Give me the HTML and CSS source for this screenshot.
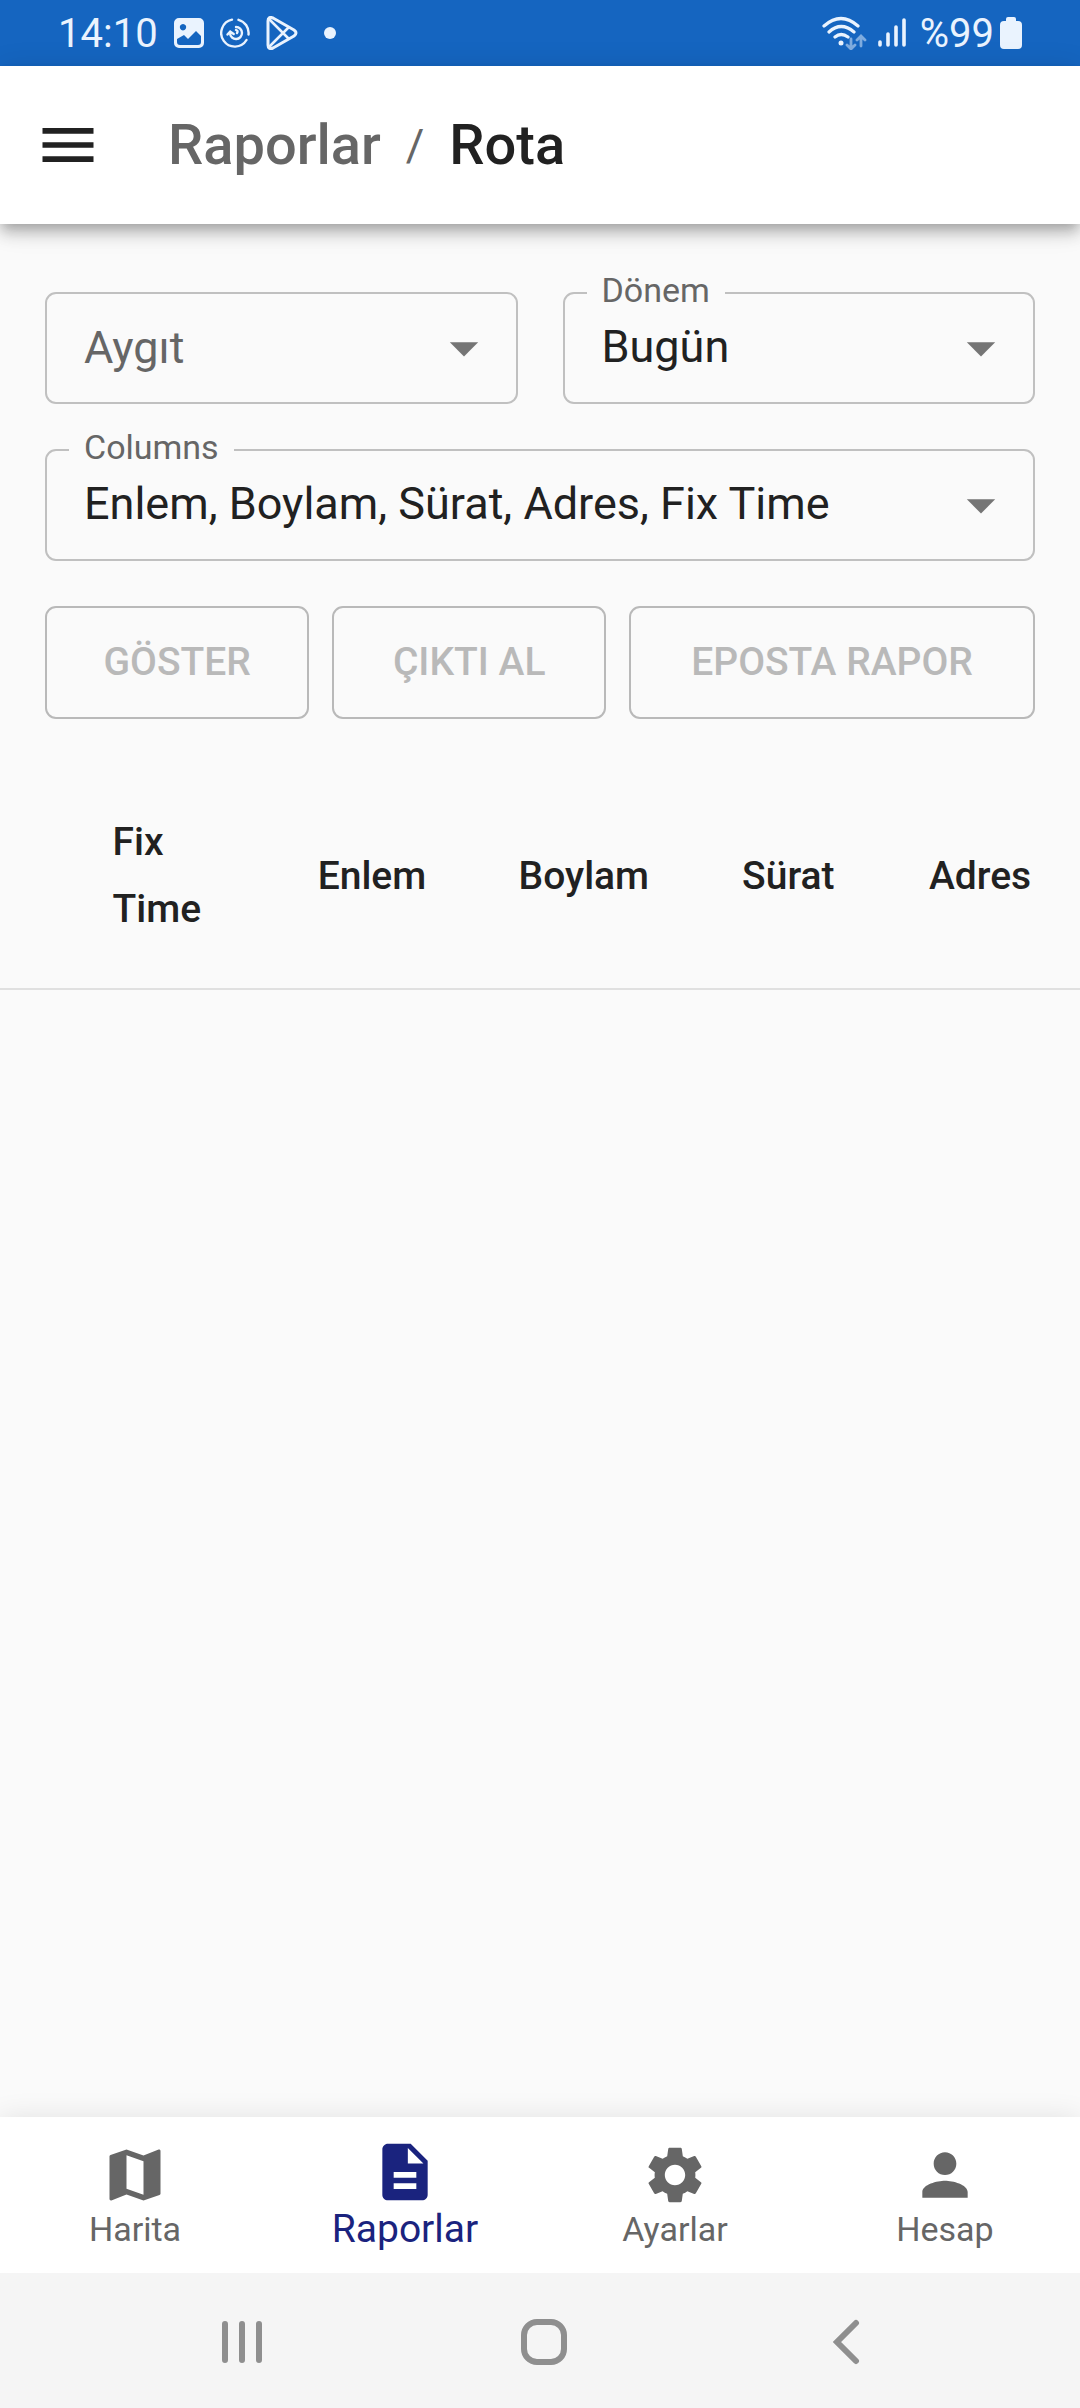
FILE: index.html
```html
<!doctype html>
<html lang="tr">
    <head>
        <meta charset="utf-8">
        <meta name="viewport" content="width=device-width, initial-scale=1">
        <title>Rota</title>
        <link rel="stylesheet" href="styles.css">
    </head>
    <body>
        <div class="status-bar">
            <div class="status-left">
                <span>14:10</span>
                <svg width="30" height="30" viewBox="0 0 30 30">
                    <path fill="currentColor" fill-rule="evenodd" d="M5 0h20a5 5 0 0 1 5 5v20a5 5 0 0 1-5 5H5a5 5 0 0 1-5-5V5a5 5 0 0 1 5-5zM9 6a3.200 3.200 0 1 0 .01 0zM3 21v3q0 3 3 3h18q3 0 3-3v-6l-5-5-8 8-4-4z"/>
                </svg>
                <svg width="30" height="32" viewBox="0 0 30 32" fill="none" stroke="currentColor" stroke-width="2.400" stroke-linecap="round">
                    <path d="M12 2.700A13.600 13.600 0 1 0 26.500 23M18.500 2.800A13.600 13.600 0 0 1 28.500 17.500"/>
                    <path d="M16 10a6 6 0 1 1-6 6.500M7.500 17.500l2.700-3 3.500 2.500M16 13q2.500 1 1 3"/>
                </svg>
                <svg width="32" height="34" viewBox="0 0 32 34" fill="none" stroke="currentColor" stroke-width="3" stroke-linejoin="round">
                    <path d="M2 5q0-5 5-3l21 12q4 3 0 6L7 32q-5 2-5-3z"/>
                    <path stroke-width="2.500" d="M3 3l20 20M3 31l20-20"/>
                </svg>
                <i class="status-dot"></i>
            </div>
            <div class="status-right">
                <svg width="46" height="34" viewBox="0 0 46 34" fill="none" stroke="currentColor" stroke-width="3.200" stroke-linecap="round">
                    <path d="M2 10q17-15 34 0M7 16q12-11 25 0M13 21q6-5 13 0"/>
                    <circle cx="19" cy="27" r="2.500" fill="currentColor" stroke="none"/>
                    <path opacity=".5" stroke-width="2.800" d="M29 23v9M25 29l4 4 4-4M39 30v-9M35 24l4-4 4 4"/>
                </svg>
                <svg width="28" height="32" viewBox="0 0 28 32" stroke="currentColor" stroke-width="3.600" stroke-linecap="round">
                    <path d="M2 25v3M10 17v11M18 10v18M26 3v25"/>
                </svg>
                <span>%99</span>
                <svg width="22" height="32" viewBox="0 0 22 32">
                    <path fill="currentColor" d="M8 0h6q2 0 2 2v2h2q4 0 4 4v20q0 4-4 4H4q-4 0-4-4V8q0-4 4-4h2V2q0-2 2-2z"/>
                </svg>
            </div>
        </div>

        <header class="app-bar">
            <button class="menu-button" type="button" aria-label="Menü">
                <svg class="icon" viewBox="0 0 24 24"><path d="M3 18h18v-2H3v2zm0-5h18v-2H3v2zm0-7v2h18V6H3z"/></svg>
            </button>
            <nav class="breadcrumbs">
                <a href="#raporlar">Raporlar</a>
                <span class="separator">/</span>
                <h1>Rota</h1>
            </nav>
        </header>

        <main>
            <form class="filter">
                <div class="field">
                    <label class="placeholder" for="device">Aygıt</label>
                    <select id="device"><option value=""></option></select>
                    <svg class="icon arrow" viewBox="0 0 24 24"><path d="M7 10l5 5 5-5z"/></svg>
                </div>
                <div class="field">
                    <label for="period">Dönem</label>
                    <select id="period"><option>Bugün</option></select>
                    <svg class="icon arrow" viewBox="0 0 24 24"><path d="M7 10l5 5 5-5z"/></svg>
                </div>
                <div class="field wide">
                    <label for="columns">Columns</label>
                    <select id="columns"><option>Enlem, Boylam, Sürat, Adres, Fix Time</option></select>
                    <svg class="icon arrow" viewBox="0 0 24 24"><path d="M7 10l5 5 5-5z"/></svg>
                </div>
                <div class="buttons wide">
                    <button type="button" disabled>GÖSTER</button>
                    <button type="button" disabled>ÇIKTI AL</button>
                    <button type="button" disabled>EPOSTA RAPOR</button>
                </div>
            </form>

            <table class="report">
                <colgroup>
                    <col class="col-action">
                    <col class="col-time">
                    <col class="col-lat">
                    <col class="col-lon">
                    <col class="col-speed">
                    <col>
                </colgroup>
                <thead>
                    <tr>
                        <td></td>
                        <th>Fix Time</th>
                        <th>Enlem</th>
                        <th>Boylam</th>
                        <th>Sürat</th>
                        <th>Adres</th>
                    </tr>
                </thead>
                <tbody></tbody>
            </table>
        </main>

        <nav class="bottom-nav">
            <a href="#harita">
                <svg class="icon" viewBox="0 0 24 24"><path d="m20.500 3-.16.03L15 5.100 9 3 3.360 4.900c-.21.07-.36.25-.36.48V20.500c0 .28.22.5.5.5l.16-.03L9 18.900l6 2.100 5.640-1.900c.21-.07.36-.25.36-.48V3.500c0-.28-.22-.5-.5-.5zM15 19l-6-2.110V5l6 2.110V19z"/></svg>
                <span>Harita</span>
            </a>
            <a href="#raporlar" class="selected" aria-current="page">
                <svg class="icon" viewBox="0 0 24 24"><path d="M14 2H6c-1.100 0-1.990.9-1.990 2L4 20c0 1.100.89 2 1.990 2H18c1.100 0 2-.9 2-2V8l-6-6zm2 16H8v-2h8v2zm0-4H8v-2h8v2zm-3-5V3.500L18.500 9H13z"/></svg>
                <span>Raporlar</span>
            </a>
            <a href="#ayarlar">
                <svg class="icon" viewBox="0 0 24 24"><path d="M19.140 12.940c.04-.3.06-.61.06-.94 0-.32-.02-.64-.07-.94l2.030-1.580c.18-.14.23-.41.12-.61l-1.920-3.320c-.12-.22-.37-.29-.59-.22l-2.390.96c-.5-.38-1.030-.7-1.620-.94l-.36-2.540c-.04-.24-.24-.41-.48-.41h-3.840c-.24 0-.43.17-.47.41l-.36 2.540c-.59.24-1.130.57-1.620.94l-2.390-.96c-.22-.08-.47 0-.59.22L2.740 8.870c-.12.21-.08.47.12.61l2.030 1.580c-.05.3-.09.63-.09.94s.02.64.07.94l-2.030 1.580c-.18.14-.23.41-.12.61l1.920 3.320c.12.22.37.29.59.22l2.390-.96c.5.38 1.030.7 1.620.94l.36 2.540c.05.24.24.41.48.41h3.840c.24 0 .44-.17.47-.41l.36-2.540c.59-.24 1.130-.56 1.620-.94l2.390.96c.22.08.47 0 .59-.22l1.920-3.320c.12-.22.07-.47-.12-.61l-2.010-1.580zM12 15.600c-1.980 0-3.600-1.620-3.600-3.600s1.620-3.600 3.600-3.600 3.600 1.620 3.600 3.600-1.620 3.600-3.600 3.600z"/></svg>
                <span>Ayarlar</span>
            </a>
            <a href="#hesap">
                <svg class="icon" viewBox="0 0 24 24"><path d="M12 12c2.210 0 4-1.790 4-4s-1.790-4-4-4-4 1.790-4 4 1.790 4 4 4zm0 2c-2.670 0-8 1.340-8 4v2h16v-2c0-2.660-5.330-4-8-4z"/></svg>
                <span>Hesap</span>
            </a>
        </nav>

        <div class="system-nav">
            <button type="button" aria-label="Son uygulamalar">
                <svg width="46" height="46" viewBox="0 0 46 46"><path d="M6 5v36M23 5v36M40 5v36"/></svg>
            </button>
            <button type="button" aria-label="Ana ekran">
                <svg width="46" height="46" viewBox="0 0 46 46"><rect x="3" y="3" width="40" height="40" rx="13"/></svg>
            </button>
            <button type="button" aria-label="Geri">
                <svg width="46" height="46" viewBox="0 0 46 46"><path d="M33 4L14 23l19 19"/></svg>
            </button>
        </div>
    </body>
</html>
```

FILE: styles.css
```css
* {
    box-sizing: border-box;
}
body {
    --color-bg: #fafafa;
    --color-text: #212121;
    --color-muted: #666;
    --color-border: #c0c0c0;
    --color-disabled: #b9b9b9;
    --color-primary: #1a237e;
    display: flex;
    flex-direction: column;
    min-height: 100vh;
    margin: 0;
    background: var(--color-bg);
    color: var(--color-text);
    font-family: Roboto, "Liberation Sans", sans-serif;
    font-size: 45px;
}
a {
    color: inherit;
    text-decoration: none;
}
button {
    margin: 0;
    padding: 0;
    border: 0;
    background: none;
    color: inherit;
    font-family: inherit;
}
svg {
    display: block;
    flex: none;
}
.icon {
    width: 68px;
    height: 68px;
    fill: currentColor;
}

/* phone status bar */
.status-bar {
    display: flex;
    justify-content: space-between;
    align-items: center;
    height: 66px;
    padding: 0 58px;
    background: #1565c0;
    color: #eaf3fe;
    font-size: 40px;
}
.status-left {
    display: flex;
    align-items: center;
    gap: 16px;
}
.status-dot {
    width: 12px;
    height: 12px;
    margin-left: 10px;
    border-radius: 50%;
    background: currentColor;
}
.status-right {
    display: flex;
    align-items: center;
    gap: 6px;
}
.status-right svg:first-child {
    margin-right: 4px;
}
.status-right span {
    margin-left: 8px;
}

/* top bar */
.app-bar {
    position: relative;
    display: flex;
    align-items: center;
    gap: 66px;
    height: 158px;
    padding: 0 34px;
    background: #fff;
    box-shadow: 0 6px 11px -3px rgba(0, 0, 0, .2), 0 11px 14px 0 rgba(0, 0, 0, .14), 0 3px 28px 0 rgba(0, 0, 0, .12);
}
.breadcrumbs {
    display: flex;
    align-items: center;
    gap: 25px;
    color: var(--color-muted);
}
.breadcrumbs a, .breadcrumbs h1 {
    margin: 0;
    font-size: 56px;
    font-weight: 500;
    line-height: 90px;
}
.breadcrumbs h1 {
    color: var(--color-text);
}

/* report filter */
main {
    flex: 1;
}
.filter {
    display: grid;
    grid-template-columns: 1fr 1fr;
    gap: 45px;
    padding: 68px 45px 45px;
}
.wide {
    grid-column: 1 / -1;
}
.field {
    position: relative;
}
.field select {
    display: block;
    width: 100%;
    height: 112px;
    padding: 0 90px 4px 37px;
    border: 2px solid var(--color-border);
    border-radius: 11px;
    appearance: none;
    background: none;
    color: inherit;
    font: inherit;
    opacity: 1;
}
.field label {
    position: absolute;
    top: -22px;
    left: 24px;
    padding: 0 15px;
    background: var(--color-bg);
    color: var(--color-muted);
    font-size: 34px;
    line-height: 40px;
}
.field .placeholder {
    top: 29px;
    font-size: 45px;
    line-height: 53px;
    pointer-events: none;
}
.arrow {
    position: absolute;
    top: 22px;
    right: 20px;
    color: #757575;
    pointer-events: none;
}
.buttons {
    display: grid;
    grid-template-columns: 28fr 29fr 43fr;
    gap: 23px;
}
.buttons button {
    height: 113px;
    padding-bottom: 2px;
    border: 2px solid var(--color-disabled);
    border-radius: 11px;
    color: var(--color-disabled);
    font-size: 39px;
    font-weight: 500;
}

/* report table */
.report {
    width: 100%;
    table-layout: fixed;
    border-collapse: collapse;
}
.report th, .report td {
    padding: 45px 0 45px 45px;
    border-bottom: 2px solid #e0e0e0;
    font-size: 39px;
    font-weight: 500;
    line-height: 67px;
    text-align: left;
}
.report td {
    padding: 0;
}
.report th:nth-child(2) {
    padding-right: 45px;
}
.col-action {
    width: 6.25%;
}
.col-time {
    width: 19%;
}
.col-lat {
    width: 18.6%;
}
.col-lon {
    width: 20.7%;
}
.col-speed {
    width: 17.3%;
}

/* app navigation */
.bottom-nav {
    display: grid;
    grid-template-columns: repeat(4, 1fr);
    height: 156px;
    background: #fff;
    color: var(--color-muted);
    font-size: 34px;
    box-shadow: 0 3px 28px 0 rgba(0, 0, 0, .12);
}
.bottom-nav a {
    display: flex;
    flex-direction: column;
    align-items: center;
    justify-content: center;
}
.bottom-nav .selected {
    color: var(--color-primary);
    font-size: 39px;
}

/* phone buttons */
.system-nav {
    position: relative;
    display: grid;
    grid-template-columns: repeat(3, 1fr);
    height: 135px;
    padding: 2px 83px 0 91px;
    background: #f5f5f5;
}
.system-nav button {
    display: flex;
    align-items: center;
    justify-content: center;
}
.system-nav svg {
    fill: none;
    stroke: #8f8f8f;
    stroke-width: 6;
    stroke-linecap: round;
}
```
